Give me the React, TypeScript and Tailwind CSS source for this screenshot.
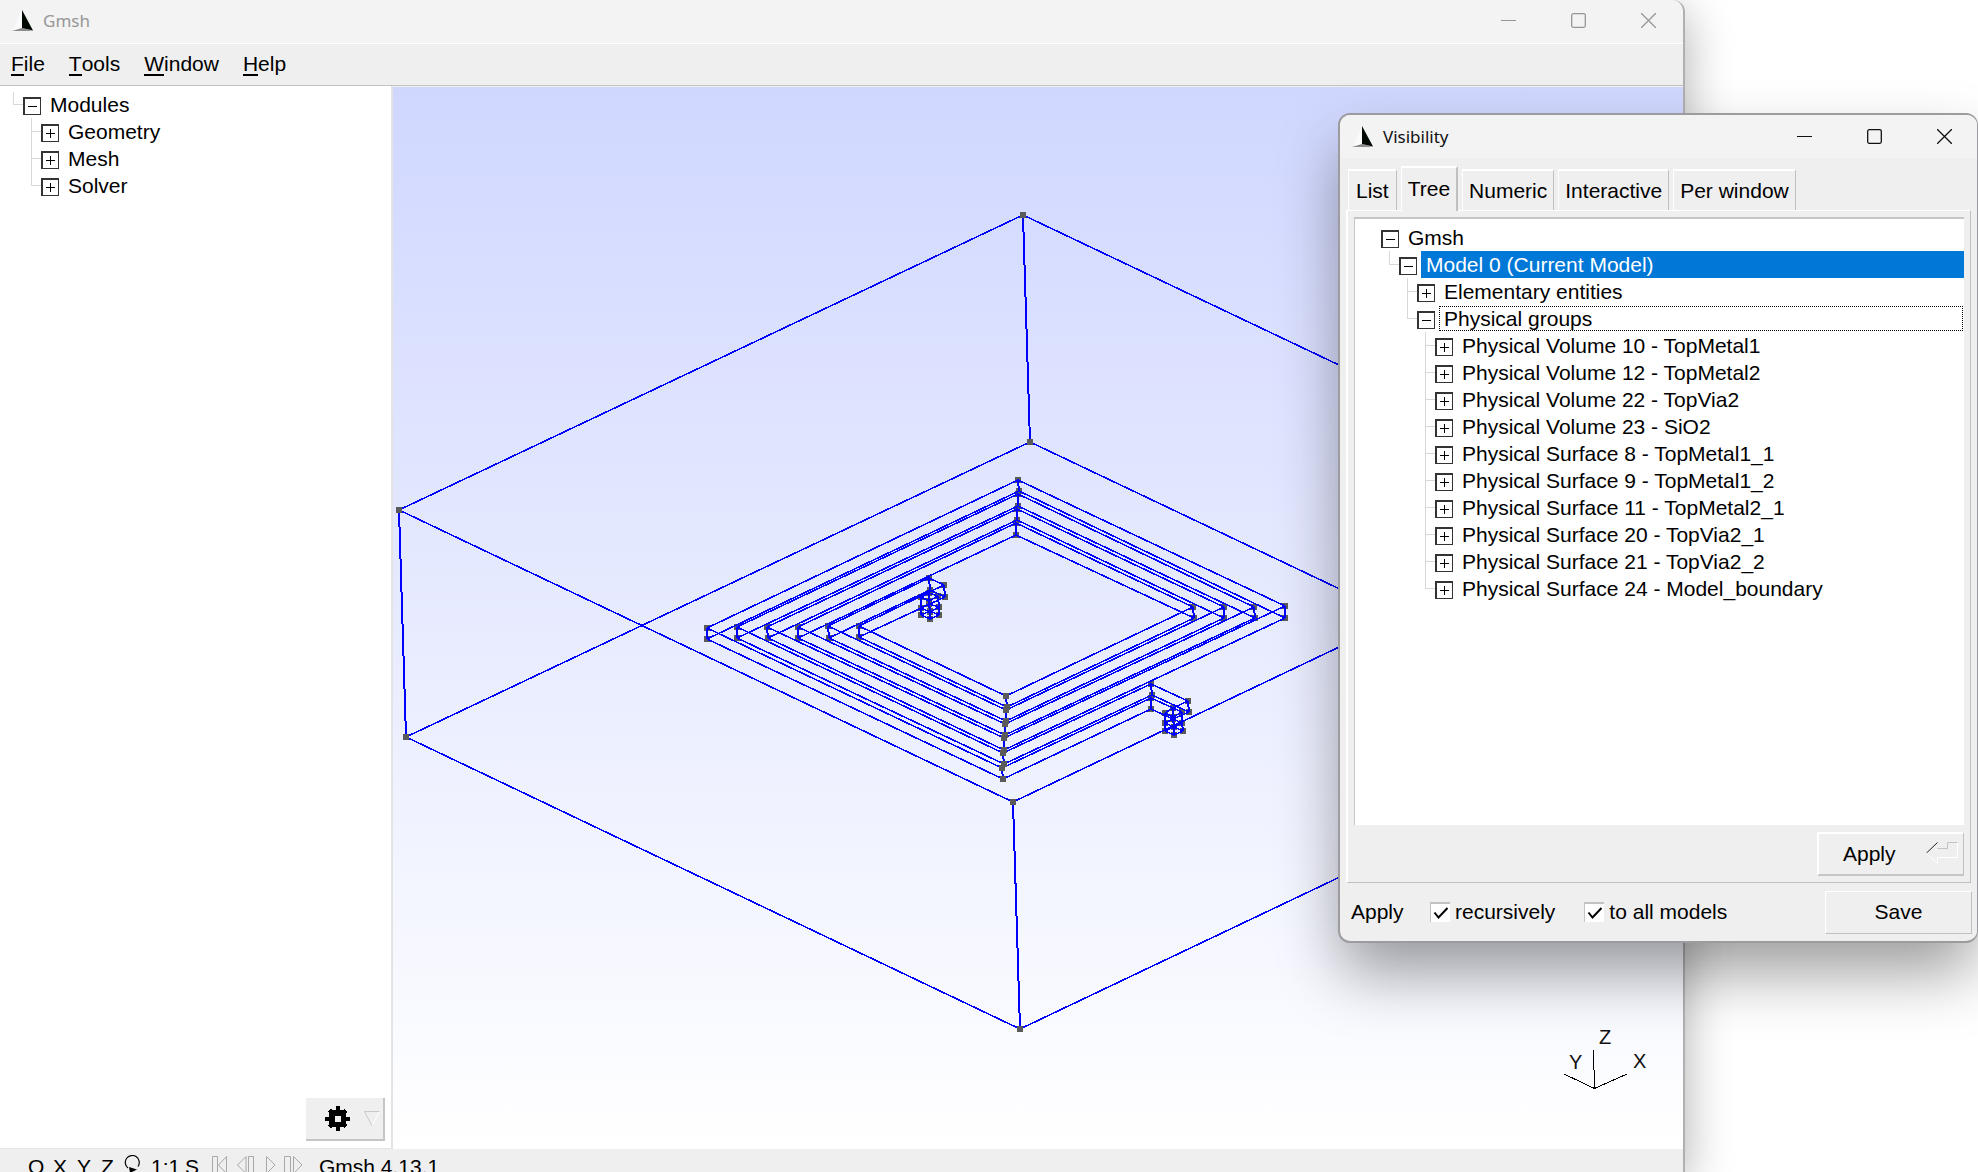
import React from "react";

type Node = {
  label: string;
  open?: boolean;
  selected?: boolean;
  focused?: boolean;
  children?: Node[];
};

const modules: Node[] = [
  {
    label: "Modules",
    open: true,
    children: [{ label: "Geometry" }, { label: "Mesh" }, { label: "Solver" }],
  },
];

const visibility: Node[] = [
  {
    label: "Gmsh",
    open: true,
    children: [
      {
        label: "Model 0 (Current Model)",
        open: true,
        selected: true,
        children: [
          { label: "Elementary entities" },
          {
            label: "Physical groups",
            open: true,
            focused: true,
            children: [
              { label: "Physical Volume 10 - TopMetal1" },
              { label: "Physical Volume 12 - TopMetal2" },
              { label: "Physical Volume 22 - TopVia2" },
              { label: "Physical Volume 23 - SiO2" },
              { label: "Physical Surface 8 - TopMetal1_1" },
              { label: "Physical Surface 9 - TopMetal1_2" },
              { label: "Physical Surface 11 - TopMetal2_1" },
              { label: "Physical Surface 20 - TopVia2_1" },
              { label: "Physical Surface 21 - TopVia2_2" },
              { label: "Physical Surface 24 - Model_boundary" },
            ],
          },
        ],
      },
    ],
  },
];

function Tree({ nodes, rootLine = false, depth = 0 }: { nodes: Node[]; rootLine?: boolean; depth?: number }) {
  return (
    <ul className={depth > 0 ? "pl-[18px]" : ""}>
      {nodes.map((n, i) => {
        const last = i === nodes.length - 1;
        const lines = depth > 0 || rootLine;
        return (
          <li key={n.label} className="relative">
            {lines && (
              <>
                <span
                  className={
                    "absolute -left-[10px] w-px bg-[#d8d8d8] " +
                    (depth === 0 ? "top-[1px] h-[12px]" : last ? "top-0 h-[13px]" : "top-0 h-full")
                  }
                />
                <span className="absolute top-[13px] -left-[10px] h-px w-[10px] bg-[#d8d8d8]" />
              </>
            )}
            <div className="flex h-[27px] items-center">
              <button
                aria-label={(n.open ? "Collapse " : "Expand ") + n.label}
                className="relative mt-[2px] h-[18px] w-[18px] shrink-0 border-t-2 border-r border-b border-l-2 border-[#333] bg-white"
              >
                <svg viewBox="0 0 15 15" className="block h-[15px] w-[15px]" shapeRendering="crispEdges">
                  <path d={n.open ? "M3 7.5h9" : "M3 7.5h9M7.5 3v9"} stroke="#000" strokeWidth="1" />
                </svg>
              </button>
              <span
                className={
                  "ml-1 flex grow items-center pt-px whitespace-nowrap " +
                  (n.selected
                    ? "h-[27px] bg-[#0078d7] pl-[5px] text-white"
                    : n.focused
                      ? "mr-px h-[25px] border border-dotted border-black pl-1"
                      : "h-[27px] pl-[5px]")
                }
              >
                {n.label}
              </span>
            </div>
            {n.open && n.children && <Tree nodes={n.children} depth={depth + 1} />}
          </li>
        );
      })}
    </ul>
  );
}

function SailIcon() {
  return (
    <svg viewBox="0 0 22 22" className="h-[22px] w-[22px]">
      <path d="M10 0 1 20 10 18Z" fill="#fafafa" />
      <path d="M0 21 10 18 21 21Z" fill="#8b8b8b" />
      <path d="M10 0 21 20.500 10 18Z" fill="#020802" />
    </svg>
  );
}

function TitleBar({ title, tone, gap }: { title: string; tone: string; gap: string }) {
  return (
    <header className={"flex shrink-0 items-center bg-[#f3f3f3] pl-3 " + tone}>
      <SailIcon />
      <h1 className="ml-[9px] grow font-['Noto_Sans',sans-serif] text-[17px] leading-6 font-normal">{title}</h1>
      <div className={"flex items-center " + gap}>
        <button aria-label="Minimize">
          <svg viewBox="0 0 15 15" className="h-[15px] w-[15px]">
            <path d="M0 7.5h15" stroke="currentColor" />
          </svg>
        </button>
        <button aria-label="Maximize">
          <svg viewBox="0 0 15 15" className="h-[15px] w-[15px]">
            <rect x="0.7" y="0.7" width="13.6" height="13.6" rx="1.500" fill="none" stroke="currentColor" strokeWidth="1.3" />
          </svg>
        </button>
        <button aria-label="Close">
          <svg viewBox="0 0 15 15" className="h-[15px] w-[15px]">
            <path d="M0 0 15 15M15 0 0 15" stroke="currentColor" strokeWidth="1.3" />
          </svg>
        </button>
      </div>
    </header>
  );
}

type P = [number, number];
type Pair = [P, P];

const left: Pair[] = [
  [[707, 628], [707, 639]],
  [[737, 627], [737, 638]],
  [[767, 627], [768, 638]],
  [[798, 627], [798, 638]],
  [[828, 626], [829, 638]],
  [[859, 626], [859, 637]],
];
const top: Pair[] = [
  [[1018, 480], [1019, 491]],
  [[1018, 494], [1018, 506]],
  [[1017, 509], [1017, 520]],
  [[1016, 523], [1016, 535]],
];
const right: Pair[] = [
  [[1285, 606], [1285, 618]],
  [[1254, 607], [1255, 618]],
  [[1224, 607], [1224, 618]],
  [[1193, 607], [1194, 618]],
];
const bottom: Pair[] = [
  [[1002, 768], [1003, 779]],
  [[1003, 753], [1004, 764]],
  [[1004, 738], [1004, 750]],
  [[1005, 724], [1005, 735]],
  [[1006, 710], [1006, 721]],
  [[1006, 696], [1007, 707]],
];
const innerEnd: Pair[] = [
  [[929, 578], [930, 590]],
  [[944, 585], [945, 597]],
];
const outerEnd: Pair[] = [
  [[1151, 698], [1151, 709]],
  [[1151, 684], [1152, 695]],
];
const outerTip: Pair[] = [
  [[1173, 708], [1173, 719]],
  [[1188, 701], [1189, 712]],
];
const box: Pair[] = [
  [[399, 510], [406, 737]],
  [[1023, 215], [1030, 442]],
  [[1636, 506], [1643, 733]],
  [[1013, 802], [1020, 1029]],
];
const innerVia: P[][] = [
  [[921, 597], [929, 593], [938, 596], [929, 601]],
  [[921, 608], [929, 604], [939, 607], [930, 612]],
  [[921, 615], [930, 611], [939, 615], [930, 619]],
];
const outerVia: P[][] = [
  [[1165, 713], [1173, 708], [1182, 712], [1173, 717]],
  [[1165, 723], [1173, 719], [1182, 723], [1174, 727]],
  [[1165, 731], [1174, 727], [1183, 731], [1174, 735]],
];

const seg = (a: P, b: P) => `M${a[0]} ${a[1]}L${b[0]} ${b[1]}`;
const face = (a: Pair, b: Pair) => seg(a[0], b[0]) + seg(a[1], b[1]);
const rings = (v: P[][]) => v.map((r) => r.map((p, i) => seg(p, r[(i + 1) % 4])).join("")).join("");
const posts = (v: P[][]) => [0, 1, 2, 3].map((i) => seg(v[0][i], v[1][i]) + seg(v[1][i], v[2][i])).join("");

const pillars = [...left, ...top, ...right, ...bottom, ...innerEnd, ...outerEnd, ...outerTip, ...box];
const uprights = pillars.map(([a, b]) => seg(a, b)).join("") + posts(innerVia) + posts(outerVia);
const slopes =
  top.map((t, i) => face(left[i], t) + face(t, right[i])).join("") +
  right.map((r, i) => face(r, bottom[i + 2])).join("") +
  left.map((l, i) => face(l, bottom[i])).join("") +
  face(left[4], innerEnd[0]) +
  face(left[5], innerEnd[1]) +
  face(innerEnd[0], innerEnd[1]) +
  face(bottom[0], outerEnd[0]) +
  face(bottom[1], outerEnd[1]) +
  face(outerEnd[0], outerTip[0]) +
  face(outerEnd[1], outerTip[1]) +
  face(outerTip[0], outerTip[1]) +
  box.map((b, i) => face(b, box[(i + 1) % 4])).join("") +
  rings(innerVia) +
  rings(outerVia);
const backPoints: P[] = [
  ...[...left, ...top, ...right, ...innerEnd, ...outerEnd, ...outerTip].flat(),
  ...innerVia.flat(),
  ...outerVia.flat(),
];
const frontPoints: P[] = [...bottom, ...box].flat();

function Vertices({ at }: { at: P[] }) {
  return at.map(([x, y], i) => <rect key={i} x={x - 3} y={y - 3} width="6" height="6" fill="#5a5a5a" />);
}

function Viewport() {
  return (
    <main className="min-w-0 grow bg-linear-to-b from-[#d0d7ff] to-white">
      <svg
        viewBox="393 87 1290 1062"
        className="block h-full w-full"
        role="img"
        aria-label="Spiral inductor geometry"
      >
        <g shapeRendering="crispEdges" fill="none">
          <Vertices at={backPoints} />
          <path d={slopes} stroke="#0000ff" strokeWidth="1.6" />
          <path d={uprights} stroke="#0000ff" strokeWidth="2" />
          <Vertices at={frontPoints} />
          <path d="M1594.500 1088.500 1593.500 1050M1594.500 1088.500 1564 1074M1594.500 1088.500 1627 1074" stroke="#000" />
        </g>
        <g className="font-['Liberation_Sans',Arial,sans-serif] text-[20px]" fill="#111">
          <text x="1599" y="1044">Z</text>
          <text x="1569" y="1069">Y</text>
          <text x="1633" y="1068">X</text>
        </g>
      </svg>
    </main>
  );
}

function StatusBar() {
  const btn = "text-left";
  return (
    <footer className="flex h-[23px] shrink-0 items-start overflow-hidden bg-[#efefef] pl-7 leading-9">
      <button className={btn + " w-[25px]"}>O</button>
      <button className={btn + " w-6"}>X</button>
      <button className={btn + " w-6"}>Y</button>
      <button className={btn + " w-[22px]"}>Z</button>
      <button aria-label="Rotate" className={btn + " w-[28px]"}>
        <svg viewBox="0 0 18 20" className="mt-[6px] h-5 w-[18px]" fill="none" stroke="#000">
          <path d="M5 13A7 7 0 1 1 15 11.500" strokeWidth="1.2" />
          <path d="M6 12 14 14.500 7 18Z" fill="#000" stroke="none" />
        </svg>
      </button>
      <button className={btn + " w-[34px]"}>1:1</button>
      <button className={btn + " w-[27px]"}>S</button>
      <button aria-label="Rewind" className={btn + " w-[25px]"}>
        <svg viewBox="0 0 16 20" className="mt-[6px] h-5 w-4" fill="none" stroke="#a8a8a8">
          <path d="M.5 1.500h5v17h-5zM14.500 1.500v17L6.500 10z" />
        </svg>
      </button>
      <button aria-label="Step back" className={btn + " w-[29px]"}>
        <svg viewBox="0 0 18 20" className="mt-[6px] h-5 w-[18px]" fill="none" stroke="#a8a8a8">
          <path d="M9 1.500v17L.5 10zM11.500 1.500h5v17h-5z" />
        </svg>
      </button>
      <button aria-label="Play" className={btn + " w-[18px]"}>
        <svg viewBox="0 0 10 20" className="mt-[6px] h-5 w-[10px]" fill="none" stroke="#a8a8a8">
          <path d="M.5 1.500v17L9 10z" />
        </svg>
      </button>
      <button aria-label="Step forward" className={btn + " w-[35px]"}>
        <svg viewBox="0 0 19 20" className="mt-[6px] h-5 w-[19px]" fill="none" stroke="#a8a8a8">
          <path d="M.5 1.500h6v17h-6zM9.500 1.500v17L18 10z" />
        </svg>
      </button>
      <p>Gmsh 4.13.1</p>
    </footer>
  );
}

function MainWindow() {
  return (
    <section className="mr-[293px] flex h-screen flex-col rounded-t-xl border-r-2 border-[#b0b0b0] bg-[#efefef] shadow-[0_12px_48px_rgba(0,0,0,0.32)]">
      <div className="flex h-[43px] shrink-0 flex-col overflow-hidden rounded-tr-xl *:grow">
        <TitleBar title="Gmsh" tone="pr-[27px] pb-[2px] text-[#969696]" gap="gap-[55px]" />
      </div>
      <nav className="flex h-[43px] shrink-0 items-center gap-6 border-t border-b border-t-white border-b-[#c3c3c3] pb-[2px] pl-[11px]">
        {["File", "Tools", "Window", "Help"].map((m) => (
          <button key={m} className="leading-6">
            <span className="inline-block border-b-2 border-black leading-5">{m[0]}</span>
            {m.slice(1)}
          </button>
        ))}
      </nav>
      <div className="flex min-h-0 grow pt-px">
        <aside className="-mt-px flex w-[393px] shrink-0 flex-col border-r-2 border-b border-[#e3e3e3] bg-white pt-[5px] pr-[6px] pb-[7px] pl-[23px]">
          <div className="grow">
            <Tree nodes={modules} rootLine />
          </div>
          <button
            aria-label="Options"
            className="flex h-[43px] w-[79px] items-center gap-[14px] self-end border-r-2 border-b-2 border-[#c5c5c5] bg-[#efefef] pl-[19px]"
          >
            <svg viewBox="0 0 25 25" className="h-[25px] w-[25px]" shapeRendering="crispEdges">
              <path
                d="M10.500 0h4v4h3l2-1 2.500 2.500-1 2v3h4v4h-4v3l1 2-2.500 2.500-2-1h-3v4h-4v-4h-3l-2 1L3 19.500l1-2v-3H0v-4h4v-3l-1-2L5.500 3l2 1h3zM9.500 9.500v6h6v-6z"
                fill="#000"
                fillRule="evenodd"
              />
            </svg>
            <svg viewBox="0 0 16 16" className="h-4 w-4" fill="none">
              <path d="M15.500.5 8 15" stroke="#fff" />
              <path d="M15.500.5H.5L8 15" stroke="#c8c8c8" />
            </svg>
          </button>
        </aside>
        <Viewport />
      </div>
      <StatusBar />
    </section>
  );
}

function Check({ label }: { label: string }) {
  return (
    <label className="flex items-center gap-[5px]">
      <span className="grid h-5 w-5 place-items-center border-t-2 border-l border-[#c3c3c3] bg-white">
        <input type="checkbox" defaultChecked className="peer col-start-1 row-start-1 h-4 w-4 appearance-none" />
        <svg viewBox="0 0 16 14" className="pointer-events-none invisible col-start-1 row-start-1 h-[14px] w-4 peer-checked:visible">
          <path d="M1.500 6.500 5.500 11.500 14.500 2" fill="none" stroke="#000" strokeWidth="2" />
        </svg>
      </span>
      {label}
    </label>
  );
}

function VisibilityWindow() {
  const tab = "border-t-2 border-r border-l border-t-white border-l-white border-r-[#c0c0c0] ";
  return (
    <section className="absolute top-[113px] right-0 flex h-[830px] w-[640px] flex-col rounded-xl border-2 border-r border-[#9c9ca0] bg-[#efefef] shadow-[0_32px_64px_-4px_rgba(0,0,0,0.4)]">
      <div className="flex h-[43px] shrink-0 flex-col overflow-hidden rounded-t-[10px] *:grow">
        <TitleBar title="Visibility" tone="pr-[25px] text-[#111]" gap="gap-[55px]" />
      </div>
      <div role="tablist" className="flex h-[52px] shrink-0 items-end gap-1 pl-2">
        <button role="tab" className={tab + "h-[41px] px-[7px]"}>List</button>
        <button role="tab" aria-selected="true" className={tab + "relative z-10 -mb-px h-[45px] border-r-2 bg-[#efefef] px-[6px] pb-[2px]"}>Tree</button>
        <button role="tab" className={tab + "h-[41px] px-[6px]"}>Numeric</button>
        <button role="tab" className={tab + "h-[41px] px-[6px]"}>Interactive</button>
        <button role="tab" className={tab + "h-[41px] px-[6px]"}>Per window</button>
      </div>
      <div
        role="tabpanel"
        className="mr-[6px] ml-[6px] flex min-h-0 grow flex-col border border-l-2 border-t-white border-r-[#c0c0c0] border-b-[#c0c0c0] border-l-white px-[6px] pt-[6px] pb-[6px]"
      >
        <div className="grow border-t-2 border-l border-[#c5c5c5] bg-white pt-[5px] pl-[26px]">
          <Tree nodes={visibility} />
        </div>
        <button className="mt-[7px] flex h-[44px] w-[147px] items-center justify-between self-end border-2 border-r border-t-white border-r-[#c0c0c0] border-b-[#c5c5c5] border-l-white pr-[5px] pl-6">
          Apply
          <svg viewBox="0 0 32 22" className="mb-[2px] h-[22px] w-8" fill="none">
            <path d="M.5 11 11.500.5" stroke="#222" />
            <path d="M.5 11.500 11.500 21.500V15.500H31.500V.5" stroke="#fff" />
            <path d="M11.500 6.500H21.500V.5H31.500" stroke="#c3c3c3" />
          </svg>
        </button>
      </div>
      <div className="flex h-[58px] shrink-0 items-center pr-[5px] pl-[11px]">
        <span className="w-[79px]">Apply</span>
        <div className="flex grow gap-[29px]">
          <Check label="recursively" />
          <Check label="to all models" />
        </div>
        <button className="h-[43px] w-[147px] border border-t-white border-r-[#c0c0c0] border-b-[#c0c0c0] border-l-white">
          Save
        </button>
      </div>
    </section>
  );
}

export default function App() {
  return (
    <div className="relative h-screen overflow-hidden bg-white font-['Liberation_Sans',Arial,sans-serif] text-[21px] leading-6 text-black">
      <MainWindow />
      <VisibilityWindow />
    </div>
  );
}
